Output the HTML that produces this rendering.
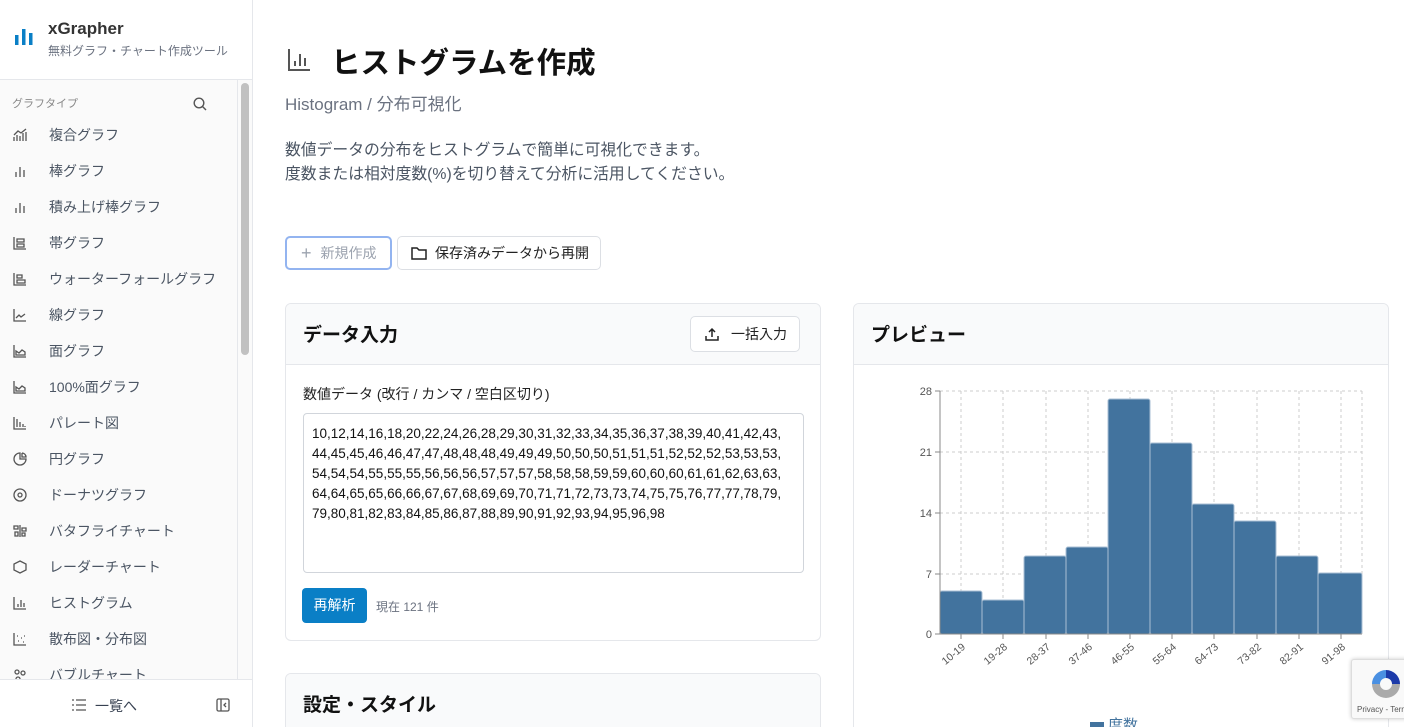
<!DOCTYPE html>
<html style="overflow:hidden;height:727px"><head><meta charset="utf-8"><style>
*{box-sizing:border-box;margin:0;padding:0}
body{width:1404px;height:727px;overflow:hidden;font-family:"Liberation Sans","Noto Sans CJK JP",sans-serif;background:#fff;position:relative;color:#111}
.sb{position:absolute;left:0;top:0;width:253px;height:727px;border-right:1px solid #e5e7eb;background:#fafafa}
.sbh{height:80px;background:#fff;border-bottom:1px solid #e5e7eb;position:relative}
.logo{position:absolute;left:14px;top:27px}
.ttl{position:absolute;left:48px;top:19px;font-size:17px;font-weight:bold;color:#333}
.sub{position:absolute;left:48px;top:42px;font-size:12px;color:#6b7280}
.gt{position:absolute;left:12px;top:95px;font-size:11px;color:#888}
.nav{position:absolute;left:0;top:117px;width:237px;height:562px;overflow:hidden}
.it{height:36px;display:flex;align-items:center;font-size:14px;color:#4b5563}
.it svg{margin-left:13px;margin-right:22px;width:14px;height:14px}
.scr{position:absolute;left:237px;top:80px;width:15px;height:599px;border-left:1px solid #e5e7eb;background:#fafafa}
.thumb{position:absolute;left:3px;top:3px;width:8px;height:272px;background:#c1c1c1;border-radius:4px}
.ft{position:absolute;left:0;top:679px;width:252px;height:48px;background:#fff;border-top:1px solid #e5e7eb;font-size:14px;color:#374151}
.card{position:absolute;border:1px solid #e5e7eb;border-radius:6px;background:#fff;overflow:hidden}
.ch{height:61px;background:#f9fafb;border-bottom:1px solid #e5e7eb;position:relative}
.ch h2{position:absolute;left:17px;top:16px;font-size:19px;font-weight:bold}
.btn{position:absolute;border:1px solid #dcdfe4;border-radius:5px;background:#fff;font-size:14px;display:flex;align-items:center}
</style></head><body>
<div class="sb">
 <div class="sbh">
  <svg class="logo" width="20" height="20" viewBox="0 0 20 20"><rect x="1" y="8" width="3.5" height="10" fill="#0a7fc6"/><rect x="8" y="2" width="3.5" height="16" fill="#0a7fc6"/><rect x="15" y="6" width="3.5" height="12" fill="#0a7fc6"/></svg>
  <div class="ttl">xGrapher</div><div class="sub">無料グラフ・チャート作成ツール</div>
 </div>
 <div class="gt">グラフタイプ</div>
 <svg style="position:absolute;left:193px;top:97px" width="14" height="14" viewBox="0 0 14 14" fill="none" stroke="#555" stroke-width="1.4"><circle cx="6" cy="6" r="4.8"/><path d="M9.5 9.5L13 13"/></svg>
 <div class="nav">
  <div class="it"><svg viewBox="0 0 14 14" fill="none" stroke="#555" stroke-width="1.3"><path d="M1 13V9M4 13V7M7 13V8M10 13V5M13 13V4M1 7l4-4 3 2 5-4"/></svg>複合グラフ</div>
  <div class="it"><svg viewBox="0 0 14 14" fill="none" stroke="#555" stroke-width="1.3"><path d="M3 13V8M7 13V3M11 13V6"/></svg>棒グラフ</div>
  <div class="it"><svg viewBox="0 0 14 14" fill="none" stroke="#555" stroke-width="1.3"><path d="M3 13V8M7 13V3M11 13V6"/></svg>積み上げ棒グラフ</div>
  <div class="it"><svg viewBox="0 0 14 14" fill="none" stroke="#555" stroke-width="1.3"><path d="M1 1v12h12M4 3h7v3H4zM4 8h7v3H4z"/></svg>帯グラフ</div>
  <div class="it"><svg viewBox="0 0 14 14" fill="none" stroke="#555" stroke-width="1.3"><path d="M1 1v12h12M4 3h5v3H4zM4 8h8v3H4z"/></svg>ウォーターフォールグラフ</div>
  <div class="it"><svg viewBox="0 0 14 14" fill="none" stroke="#555" stroke-width="1.3"><path d="M1 1v12h12M3 10l3-3 2 2 4-3"/></svg>線グラフ</div>
  <div class="it"><svg viewBox="0 0 14 14" fill="none" stroke="#555" stroke-width="1.3"><path d="M1 1v12h12M3 11V7l3 2 3-3 3 2v3z"/></svg>面グラフ</div>
  <div class="it"><svg viewBox="0 0 14 14" fill="none" stroke="#555" stroke-width="1.3"><path d="M1 1v12h12M3 11V7l3 2 3-3 3 2v3z"/></svg>100%面グラフ</div>
  <div class="it"><svg viewBox="0 0 14 14" fill="none" stroke="#555" stroke-width="1.3"><path d="M1 1v12h12M4 11V3M7 11V6M10 11V8M12 11v-1"/></svg>パレート図</div>
  <div class="it"><svg viewBox="0 0 14 14" fill="none" stroke="#555" stroke-width="1.3"><path d="M7 1a6 6 0 1 0 6 6H7z M9 1v4h4a4 4 0 0 0-4-4"/></svg>円グラフ</div>
  <div class="it"><svg viewBox="0 0 14 14" fill="none" stroke="#555" stroke-width="1.3"><circle cx="7" cy="7" r="6"/><circle cx="7" cy="7" r="2"/></svg>ドーナツグラフ</div>
  <div class="it"><svg viewBox="0 0 14 14" fill="none" stroke="#555" stroke-width="1.3"><path d="M7 1v12M1 2h4v3H1zM9 4h4v3H9zM2 8h3v4H2zM9 9h3v3H9z"/></svg>バタフライチャート</div>
  <div class="it"><svg viewBox="0 0 14 14" fill="none" stroke="#555" stroke-width="1.3"><path d="M7 1l6 3v6l-6 3-6-3V4z"/></svg>レーダーチャート</div>
  <div class="it"><svg viewBox="0 0 14 14" fill="none" stroke="#555" stroke-width="1.3"><path d="M1 1v12h12M5 11V8M8 11V4M11 11V7"/></svg>ヒストグラム</div>
  <div class="it"><svg viewBox="0 0 14 14" fill="none" stroke="#555" stroke-width="1.3"><path d="M1 1v12h12M4 4h1M8 6h1M5 9h1M10 10h1M11 4h1"/></svg>散布図・分布図</div>
  <div class="it"><svg viewBox="0 0 14 14" fill="none" stroke="#555" stroke-width="1.3"><circle cx="4" cy="4" r="2"/><circle cx="10" cy="5" r="2"/><circle cx="5" cy="11" r="2"/></svg>バブルチャート</div>
 </div>
 <div class="scr"><div class="thumb"></div></div>
 <div class="ft">
  <svg style="position:absolute;left:72px;top:19px" width="14" height="12" viewBox="0 0 14 12" fill="none" stroke="#555" stroke-width="1.3"><path d="M4 1h10M4 6h10M4 11h10M0 1h2M0 6h2M0 11h2"/></svg>
  <span style="position:absolute;left:95px;top:16px">一覧へ</span>
  <svg style="position:absolute;left:216px;top:18px" width="14" height="14" viewBox="0 0 14 14" fill="none" stroke="#555" stroke-width="1.3"><rect x="1" y="1" width="12" height="12" rx="1.5"/><path d="M5 1v12M10 5L8 7l2 2"/></svg>
 </div>
</div>

<svg style="position:absolute;left:287px;top:48px" width="24" height="24" viewBox="0 0 24 24" fill="none" stroke="#555" stroke-width="2"><path d="M2 1v21h21M8 18v-5M13 18V6M18 18v-8"/></svg>
<div style="position:absolute;left:331px;top:40px;font-size:29.5px;font-weight:bold">ヒストグラムを作成</div>
<div style="position:absolute;left:285px;top:90px;font-size:17px;color:#6b7280">Histogram / 分布可視化</div>
<div style="position:absolute;left:285px;top:139px;font-size:15.8px;color:#4b5563;line-height:24px">数値データの分布をヒストグラムで簡単に可視化できます。<br>度数または相対度数(%)を切り替えて分析に活用してください。</div>

<div class="btn" style="left:285px;top:236px;width:107px;height:34px;border:2px solid #93b4f0;color:#9ca3af"><span style="margin-left:14px;font-size:18px;margin-right:9px">+</span>新規作成</div>
<div class="btn" style="left:397px;top:236px;width:204px;height:34px;color:#222">
 <svg style="margin-left:13px;margin-right:8px" width="16" height="14" viewBox="0 0 16 14" fill="none" stroke="#222" stroke-width="1.5"><path d="M1 2h5l2 2h7v9H1z"/></svg>保存済みデータから再開</div>

<div class="card" style="left:285px;top:303px;width:536px;height:338px">
 <div class="ch"><h2>データ入力</h2>
  <div class="btn" style="left:404px;top:12px;width:110px;height:36px;color:#222"><svg style="margin-left:14px;margin-right:12px" width="14" height="14" viewBox="0 0 14 14" fill="none" stroke="#222" stroke-width="1.5"><path d="M7 10V2M4 5l3-3 3 3M1 9v4h12V9"/></svg>一括入力</div>
 </div>
 <div style="position:absolute;left:17px;top:80px;font-size:14px;color:#222">数値データ (改行 / カンマ / 空白区切り)</div>
 <div style="position:absolute;left:17px;top:109px;width:501px;height:160px;border:1px solid #d1d5db;border-radius:4px;padding:10px 18px 10px 8px;font-size:13.5px;line-height:20px;color:#111;word-break:break-all">10,12,14,16,18,20,22,24,26,28,29,30,31,32,33,34,35,36,37,38,39,40,41,42,43,44,45,45,46,46,47,47,48,48,48,49,49,49,50,50,50,51,51,51,52,52,52,53,53,53,54,54,54,55,55,55,56,56,56,57,57,57,58,58,58,59,59,60,60,60,61,61,62,63,63,64,64,65,65,66,66,67,67,68,69,69,70,71,71,72,73,73,74,75,75,76,77,77,78,79,79,80,81,82,83,84,85,86,87,88,89,90,91,92,93,94,95,96,98</div>
 <div style="position:absolute;left:16px;top:284px;width:65px;height:35px;background:#0a7fc6;border-radius:4px;color:#fff;font-size:14px;text-align:center;line-height:35px">再解析</div>
 <div style="position:absolute;left:90px;top:294px;font-size:12px;color:#6b7280">現在 121 件</div>
</div>

<div class="card" style="left:285px;top:673px;width:536px;height:80px"><div class="ch"><h2>設定・スタイル</h2></div></div>

<div class="card" style="left:853px;top:303px;width:536px;height:440px">
 <div class="ch"><h2>プレビュー</h2></div>
</div>
<svg style="position:absolute;left:854px;top:370px" width="534" height="357" viewBox="854 370 534 357" font-family="Liberation Sans" font-size="11" fill="#555">
 <g stroke="#ccc" stroke-dasharray="3 3">
  <path d="M940 391H1362M940 452H1362M940 513H1362M940 574H1362"/>
  <path d="M961 391V634M1003 391V634M1046 391V634M1088 391V634M1130 391V634M1172 391V634M1214 391V634M1257 391V634M1299 391V634M1341 391V634M1362 391V634"/>
 </g>
 <g fill="#42739e" stroke="#a9bfd4" stroke-width="1">
  <rect x="940" y="591" width="42" height="43" rx="2"/>
  <rect x="982" y="600" width="42" height="34" rx="2"/>
  <rect x="1024" y="556" width="42" height="78" rx="2"/>
  <rect x="1066" y="547" width="42" height="87" rx="2"/>
  <rect x="1108" y="399" width="42" height="235" rx="2"/>
  <rect x="1150" y="443" width="42" height="191" rx="2"/>
  <rect x="1192" y="504" width="42" height="130" rx="2"/>
  <rect x="1234" y="521" width="42" height="113" rx="2"/>
  <rect x="1276" y="556" width="42" height="78" rx="2"/>
  <rect x="1318" y="573" width="44" height="61" rx="2"/>
 </g>
 <path d="M940 391V634H1362M935 391h5M935 452h5M935 513h5M935 574h5M935 634h5M961 634v5M1003 634v5M1046 634v5M1088 634v5M1130 634v5M1172 634v5M1214 634v5M1257 634v5M1299 634v5M1341 634v5" stroke="#888" fill="none"/>
 <g text-anchor="end"><text x="932" y="395">28</text><text x="932" y="456">21</text><text x="932" y="517">14</text><text x="932" y="578">7</text><text x="932" y="638">0</text></g>
 <g text-anchor="end" font-size="10.5">
  <text transform="translate(966 648) rotate(-40)">10-19</text><text transform="translate(1008 648) rotate(-40)">19-28</text><text transform="translate(1051 648) rotate(-40)">28-37</text><text transform="translate(1093 648) rotate(-40)">37-46</text><text transform="translate(1135 648) rotate(-40)">46-55</text><text transform="translate(1177 648) rotate(-40)">55-64</text><text transform="translate(1219 648) rotate(-40)">64-73</text><text transform="translate(1262 648) rotate(-40)">73-82</text><text transform="translate(1304 648) rotate(-40)">82-91</text><text transform="translate(1346 648) rotate(-40)">91-98</text>
 </g>
 <rect x="1090" y="722" width="14" height="8" fill="#42739e"/>
 <text x="1108" y="730" font-size="15" fill="#42739e">度数</text>
</svg>
<div style="position:absolute;left:1351px;top:659px;width:60px;height:60px;background:#f9f9f9;border:1px solid #ddd;border-radius:3px;box-shadow:0 0 4px rgba(0,0,0,.2)">
 <svg style="position:absolute;left:16px;top:6px" width="36" height="36" viewBox="0 0 36 36"><path d="M4 18a14 14 0 0 1 14-14v8a6 6 0 0 0-6 6z" fill="#4a90e2"/><path d="M18 4a14 14 0 0 1 14 14h-8a6 6 0 0 0-6-6z" fill="#1c3aa9"/><path d="M4 18h8a6 6 0 0 0 12 0h8a14 14 0 0 1-28 0z" fill="#aaa"/></svg>
 <div style="position:absolute;left:5px;top:45px;font-size:8px;color:#555;white-space:nowrap">Privacy - Terms</div>
</div>
</body></html>
